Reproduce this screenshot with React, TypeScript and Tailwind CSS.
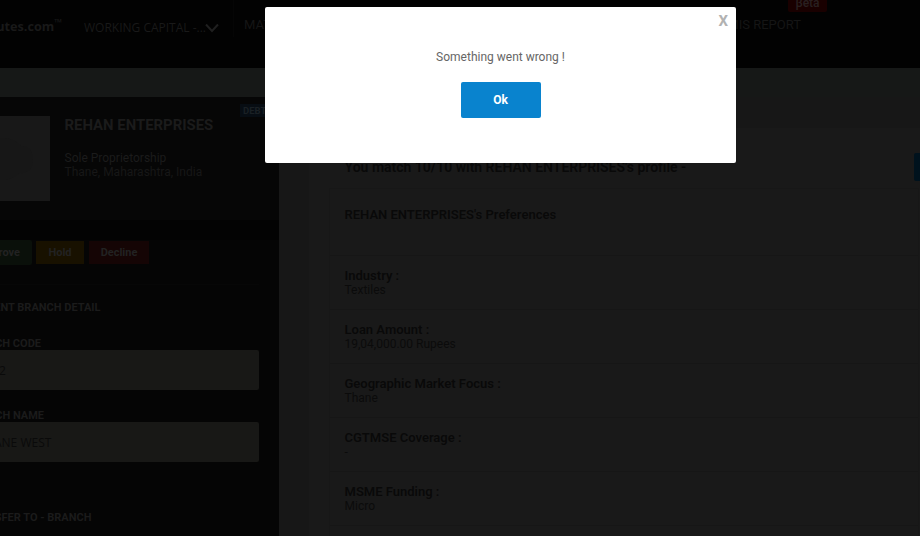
import React from 'react';

const preferences = [
  { label: 'Industry :', value: 'Textiles' },
  { label: 'Loan Amount :', value: '19,04,000.00 Rupees' },
  { label: 'Geographic Market Focus :', value: 'Thane' },
  { label: 'CGTMSE Coverage :', value: '-' },
  { label: 'MSME Funding :', value: 'Micro' },
];

function Header() {
  return (
    <header className="flex h-[68px] items-start overflow-hidden bg-[#020202] text-[#191919]">
      <div className="flex w-[62px] shrink-0 justify-end pt-[17px] font-['Open_Sans',sans-serif] text-[12.7px] leading-[18px] font-bold whitespace-nowrap">
        <span>utes.com</span>
        <span className="-mt-[3px] text-[10px] leading-[16px]">™</span>
      </div>
      <div className="ml-[22px] flex w-[150px] shrink-0 border-r border-[#050505] pt-[19px] font-['Open_Sans',sans-serif] text-[12px] leading-[18px] whitespace-nowrap">
        <span className="w-[121px]">WORKING CAPITAL -...</span>
        <svg className="mt-[4px] h-[10px] w-[14px] shrink-0" viewBox="0 0 14 10" fill="none" stroke="#1f1f1f" strokeWidth="2">
          <path d="M1 1.5 7 8l6-6.5" />
        </svg>
      </div>
      <span className="ml-[10px] w-[100px] pt-[16px] text-[13px] leading-[18px] text-[#151515]">MATCHES</span>
      <div className="ml-auto flex w-[220px] flex-col items-start">
        <span className="ml-[88px] h-[12px] w-[39px] rounded-b-[2px] bg-[#190000] text-center text-[12px] leading-[7px] font-medium text-[#292020]">
          βeta
        </span>
        <span className="mt-[4px] flex w-[101px] justify-end text-[13px] leading-[18px] whitespace-nowrap text-[#151515]">MIS REPORT</span>
      </div>
    </header>
  );
}

function Field({ label, value }: { label: string; value: string }) {
  return (
    <div className="mb-[18px] flex h-[54px] flex-col">
      <div className="-ml-[41px] h-[14px] text-[11px] leading-[16px] font-bold text-[#1b1b1b]">{label}</div>
      <div className="flex h-10 w-[259px] items-center overflow-hidden rounded-r-[2px] bg-[#181816] pt-px font-['Open_Sans',sans-serif] text-[12px] text-[#0a0a0a]">
        {value}
      </div>
    </div>
  );
}

function Sidebar() {
  return (
    <aside className="flex h-[439px] w-[279px] shrink-0 flex-col overflow-hidden bg-[#050505]">
      <div className="flex h-[123px] bg-[#060606] pt-[7px]">
        <div className="mt-[12px] flex h-[85px] w-[50px] items-center bg-[#181818]">
          <svg className="h-[42px] w-[34px]" viewBox="0 0 34 42" fill="#171717">
            <path d="M0 0c11-1 19 5 21 8 8-1 12 6 12 14 0 10-7 14-13 13-6 5-13 8-20 7z" />
          </svg>
        </div>
        <div className="ml-[14.5px] mt-[11px] w-[175.5px] text-[12px] leading-[14px] text-[#1b1b1b]">
          <h1 className="mb-[15px] text-[14.9px] leading-[21px] font-bold whitespace-nowrap">REHAN ENTERPRISES</h1>
          <p>Sole Proprietorship</p>
          <p className="text-[#171717]">Thane, Maharashtra, India</p>
        </div>
        <span className="h-[13px] w-[39px] bg-[#070d13] pl-[3px] text-[9.5px] leading-[14px] font-bold text-[#1a2024]">DEBT</span>
      </div>
      <div className="h-5 bg-[#030303]" />
      <div className="flex h-[25px] items-center gap-1 text-[11px] font-bold text-[#222]">
        <div className="flex h-[25px] w-8 items-center justify-end rounded-r-[2px] bg-[#0a100a] pt-px pr-3">
          <span>Approve</span>
        </div>
        <div className="flex h-[23px] w-12 items-center justify-center bg-[#181100] pt-px">Hold</div>
        <div className="ml-px flex h-[23px] w-[60px] items-center justify-center bg-[#150505] pt-px">Decline</div>
      </div>
      <div className="mt-[19px] h-px w-[259px] bg-[#070707]" />
      <div className="mt-[16px] mb-[21px] -ml-[42px] h-[14px] w-[142.5px] text-right text-[11px] leading-[14px] font-bold whitespace-nowrap text-[#1b1b1b]">
        CURRENT BRANCH DETAIL
      </div>
      <div className="h-[144px] shrink-0">
        <div className="[&>div>div:first-child]:w-[82px] [&>div>div:first-child]:text-right [&>div>div:last-child]:indent-[-1px]">
          <Field label="BRANCH CODE" value="2" />
        </div>
        <div className="[&>div>div:first-child]:w-[85px] [&>div>div:first-child]:text-right [&>div>div:last-child]:indent-[-6px]">
          <Field label="BRANCH NAME" value="ANE WEST" />
        </div>
      </div>
      <div className="mt-[31px] -ml-[42px] w-[133.5px] text-right text-[11px] leading-[14px] font-bold whitespace-nowrap text-[#1b1b1b]">
        TRANSFER TO - BRANCH
      </div>
    </aside>
  );
}

function Profile() {
  return (
    <main className="flex h-[439px] flex-1 flex-col overflow-hidden pt-[31px] pl-[30px]">
      <section className="flex flex-1 flex-col bg-[#191919] pl-[20px]">
        <div className="flex h-[60px] items-start pl-[15.5px]">
          <h2 className="mt-[30px] flex-1 text-[14px] leading-[18px] font-semibold text-[#090909]">
            You match 10/10 with REHAN ENTERPRISES's profile -
          </h2>
          <div className="mt-[25px] h-7 w-[6px] rounded-l-[2px] bg-[#00121d]" />
        </div>
        <div className="mr-[1px] flex-1 border border-b-0 border-[#171717]">
          <h3 className="h-[67px] border-b border-[#161616] pt-[17px] pl-[14.5px] text-[13px] leading-[18px] font-semibold text-[#090909]">
            REHAN ENTERPRISES's Preferences
          </h3>
          {preferences.map((item) => (
            <div key={item.label} className="h-[54px] border-b border-[#161616] pt-[13px] pl-[14.5px] leading-[14px]">
              <div className="text-[13px] font-semibold text-[#090909]">{item.label}</div>
              <div className="text-[12px] text-[#0b0b0b]">{item.value}</div>
            </div>
          ))}
        </div>
      </section>
    </main>
  );
}

function Alert() {
  return (
    <div role="dialog" className="absolute top-[7px] left-[265px] flex h-[156px] w-[471px] flex-col items-center rounded-[2px] bg-white">
      <button className="mr-[8px] h-[27px] self-end pt-px text-[15px] leading-[27px] font-bold text-[#b2b2b2]">X</button>
      <p className="mt-[14px] h-[18px] text-[12px] leading-[18px] text-[#666]">Something went wrong !</p>
      <button className="mt-4 h-9 w-20 rounded-[2px] bg-[#0983ce] text-[12px] font-bold text-white">Ok</button>
    </div>
  );
}

export default function App() {
  return (
    <div className="relative h-[536px] w-[920px] overflow-hidden bg-[#171717] font-[Roboto,sans-serif]">
      <Header />
      <div className="h-[29px] bg-[#161817]" />
      <div className="flex">
        <Sidebar />
        <Profile />
      </div>
      <Alert />
    </div>
  );
}
